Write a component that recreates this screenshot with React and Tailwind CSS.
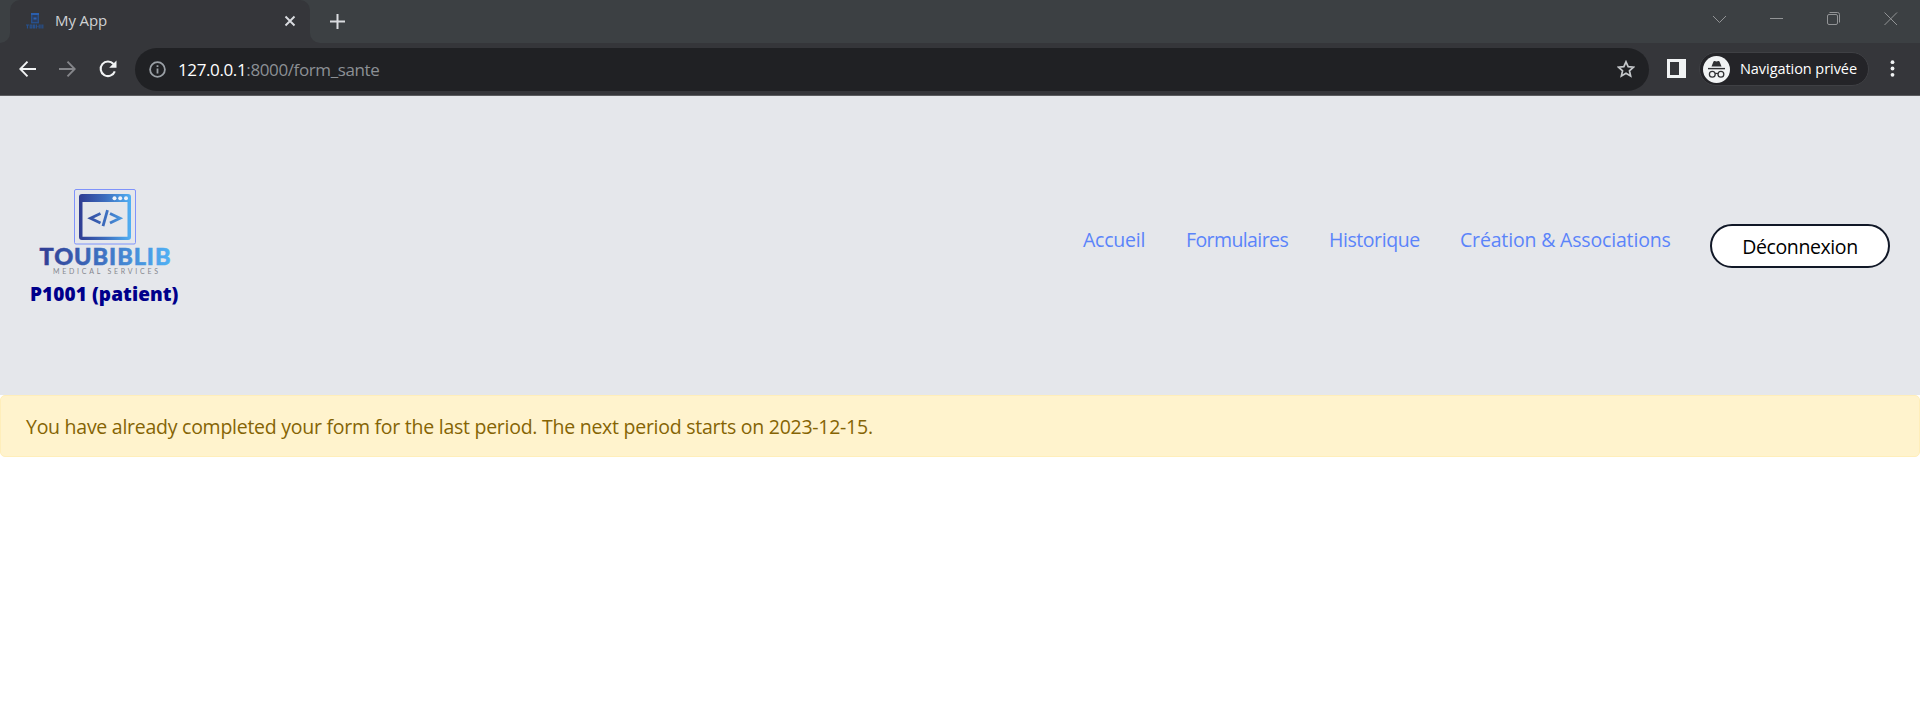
function CodeWindowLogo() {
  return (
    <svg width="148" height="86" viewBox="0 0 148 86" className="block">
      <defs>
        <linearGradient id="brand" gradientUnits="userSpaceOnUse" x1="9" y1="0" x2="140" y2="0">
          <stop offset="0" stopColor="#2f3c92" />
          <stop offset="0.5" stopColor="#3f74c4" />
          <stop offset="1" stopColor="#50b0f4" />
        </linearGradient>
        <linearGradient id="frame" gradientUnits="userSpaceOnUse" x1="49" y1="0" x2="101" y2="0">
          <stop offset="0" stopColor="#2f3c92" />
          <stop offset="0.5" stopColor="#3c6cbd" />
          <stop offset="1" stopColor="#50b0f4" />
        </linearGradient>
      </defs>
      <rect x="44.5" y="0.5" width="61" height="54.5" rx="1.5" fill="none" stroke="#7f93fb" />
      <path
        fill="url(#frame)"
        fillRule="evenodd"
        d="M52 5H98Q101 5 101 8V48Q101 51 98 51H52Q49 51 49 48V8Q49 5 52 5ZM52.500 13V47.700H97.500V13Z"
      />
      <circle cx="84.5" cy="9.3" r="2" fill="#eef2f8" />
      <circle cx="90.2" cy="9.3" r="2" fill="#eef2f8" />
      <circle cx="96" cy="9.3" r="2" fill="#eef2f8" />
      <path
        d="M70.500 24.500L60.500 29.300L70.500 34.100M80 24.500L90 29.300L80 34.100M77.500 21.200L73 37.200"
        fill="none"
        stroke="url(#frame)"
        strokeWidth="2.8"
      />
      <text x="9.500" y="75.800" textLength="131" lengthAdjust="spacing" fill="url(#brand)" stroke="url(#brand)" strokeWidth="0.5" className="font-['Lato',sans-serif] text-[23.5px] font-black">
        TOUBIBLIB
      </text>
      <text x="23" y="85.300" textLength="105" fill="#85878f" className="font-['Lato',sans-serif] text-[7px]">
        MEDICAL SERVICES
      </text>
    </svg>
  );
}

function Favicon() {
  return (
    <svg width="18" height="18" viewBox="0 0 18 18">
      <rect x="5.700" y="1.700" width="6.600" height="9" fill="#2b3c5c" stroke="#27508c" strokeWidth="1.400" />
      <path d="M5 1h8v2H5z" fill="#2a5fae" />
      <path d="M7.500 5.500h3v2h-3z" fill="#2f62b0" />
      <path
        d="M0 13h3M1.500 13v3.500M4.200 13h1.600v3H4.200zM7.500 12.500v3.500h1.200v-3.500M10.500 12.500v4M11.500 14.500h.8M13.200 12.500v4M15 12.500v4M16.800 12.500v4"
        fill="none"
        stroke="#27508c"
        strokeWidth="1.200"
      />
    </svg>
  );
}

function TabStrip() {
  return (
    <div className="flex h-[43px] bg-[#3c4043]">
      <div className="flex w-[10px] items-end bg-[#35363a]">
        <div className="h-full w-full rounded-br-[10px] bg-[#3c4043]" />
      </div>
      <div className="h-full w-[300px] bg-[#3c4043]">
        <div className="flex h-full items-center rounded-t-[10px] bg-[#35363a] pb-[1px] pl-4">
          <Favicon />
          <span className="ml-[11px] flex-1 pb-[2px] font-['Open_Sans',sans-serif] text-[15px] leading-[18px] tracking-[-0.100px] text-[#d0d2d4]">My App</span>
          <svg width="12" height="12" viewBox="0 0 12 12" className="mr-[14px]">
            <path d="M1.500 1.500l9 9M10.500 1.500l-9 9" stroke="#dadce0" strokeWidth="1.900" />
          </svg>
        </div>
      </div>
      <div className="flex-1 bg-[#35363a]">
        <div className="flex h-full items-center justify-between rounded-bl-[10px] bg-[#3c4043] pl-5 pr-[22px]">
          <svg width="15" height="15" viewBox="0 0 15 15">
            <path d="M7.500 0v15M0 7.500h15" stroke="#dadce0" strokeWidth="2" />
          </svg>
          <div className="flex items-center gap-[44px] pb-[6px]">
            <svg width="13" height="14" viewBox="0 0 13 14" fill="none" stroke="#929496">
              <path d="M0 4l6.500 6.500L13 4" />
            </svg>
            <svg width="13" height="14" viewBox="0 0 13 14" fill="none" stroke="#929496">
              <path d="M0 6.500h13" />
            </svg>
            <svg width="13" height="14" viewBox="0 0 13 14" fill="none" stroke="#929496">
              <rect x="0.500" y="2.500" width="10" height="10" rx="1.500" />
              <path d="M2.500 0.500h8a2 2 0 0 1 2 2v8" />
            </svg>
            <svg width="14" height="14" viewBox="0 0 14 14" fill="none" stroke="#929496">
              <path d="M0.500 0.500l12.500 12.500M13 0.500l-12.500 12.500" />
            </svg>
          </div>
        </div>
      </div>
    </div>
  );
}

function Incognito() {
  return (
    <svg width="27" height="27" viewBox="0 0 27 27">
      <circle cx="13.500" cy="13.500" r="13.500" fill="#f1f3f4" />
      <path d="M8.500 10.500l2-5q.4-.8 1.200-.5l1.800.5 1.800-.5q.8-.3 1.200.5l2 5z" fill="#303134" />
      <path d="M5 12.600h17" stroke="#303134" strokeWidth="1.400" />
      <g fill="none" stroke="#303134" strokeWidth="1.300">
        <circle cx="9.300" cy="18.300" r="2.900" />
        <circle cx="17.900" cy="18.300" r="2.900" />
        <path d="M12.200 17.800q1.400-.8 2.800 0" />
      </g>
    </svg>
  );
}

function Toolbar() {
  return (
    <div className="flex h-[53px] items-center border-b border-[#5b5c5f] bg-[#35363a] pl-[19px]">
      <svg width="17" height="16" viewBox="0 0 17 16" fill="none" stroke="#f1f3f4" strokeWidth="1.900" className="mb-[1px]">
        <path d="M17 8H1.500M8.500 0.700L1.300 8l7.200 7.300" />
      </svg>
      <svg width="17" height="16" viewBox="0 0 17 16" fill="none" stroke="#85868a" strokeWidth="1.900" className="mb-[1px] ml-[23px]">
        <path d="M0 8h15.500M8.500 0.700L15.700 8l-7.200 7.300" />
      </svg>
      <svg width="18" height="18" viewBox="0 0 18 18" className="mb-[1px] ml-[23px]">
        <path d="M15.800 11.300A7.300 7.300 0 1 1 14.500 4" fill="none" stroke="#f1f3f4" strokeWidth="2.100" />
        <path d="M17.500 0.500v7.300h-7.300z" fill="#f1f3f4" />
      </svg>
      <div className="ml-[18px] flex h-[43px] w-[1514px] items-center rounded-full bg-[#202124] pl-[14px] pr-[14px]">
        <svg width="17" height="17" viewBox="0 0 17 17">
          <circle cx="8.500" cy="8.500" r="7.400" fill="none" stroke="#9aa0a6" strokeWidth="1.800" />
          <path d="M8.500 7.500v5M8.500 4.300v1.800" stroke="#9aa0a6" strokeWidth="1.800" />
        </svg>
        <span className="ml-[12px] flex-1 pt-[2px] font-['Open_Sans',sans-serif] text-[17px] leading-6 tracking-[-0.380px] text-[#8c9095]">
          <span className="text-white">127.0.0.1</span>:8000/form_sante
        </span>
        <svg width="18" height="18" viewBox="0 0 18 18">
          <path d="M9 1.800l2.150 4.900 5.300.5-4 3.550 1.180 5.250L9 13.250 4.370 16l1.180-5.250-4-3.550 5.300-.5z" fill="none" stroke="#c4c7ca" strokeWidth="1.700" />
        </svg>
      </div>
      <svg width="19" height="19" viewBox="0 0 19 19" className="mb-[1px] ml-[18px]">
        <path d="M0 0h19v19H0zM3 3v13h9V3z" fill="#f1f3f4" fillRule="evenodd" />
      </svg>
      <div className="ml-[13px] flex h-[34px] w-[170px] items-center rounded-full border border-[#3f4044] bg-[#242428] pl-[3px]">
        <Incognito />
        <span className="ml-[10px] whitespace-nowrap font-['Open_Sans',sans-serif] text-[14.500px] leading-5 tracking-[-0.060px] text-white">Navigation privée</span>
      </div>
      <svg width="5" height="17" viewBox="0 0 5 17" fill="#f1f3f4" className="mb-[1px] ml-[21px]">
        <circle cx="2.500" cy="2.200" r="1.900" />
        <circle cx="2.500" cy="8.500" r="1.900" />
        <circle cx="2.500" cy="14.800" r="1.900" />
      </svg>
    </div>
  );
}

export default function App() {
  return (
    <div className="min-h-[722px] w-full bg-white font-['Open_Sans','Noto_Sans',sans-serif]">
      <TabStrip />
      <Toolbar />
      <header className="flex h-[299px] items-start justify-between bg-[#e5e7eb] pl-[30px] pr-[30px]">
        <div className="flex flex-col items-start pt-[93px]">
          <CodeWindowLogo />
          <p className="mt-1 whitespace-nowrap text-[19px] font-extrabold leading-[30px] tracking-[0.080px] text-[#00008b]">P1001 (patient)</p>
        </div>
        <nav className="flex items-start pt-[128px] text-[19.500px] leading-[30px] text-[#5b84fa]">
          <div className="mt-[1px] flex">
            <a className="w-[103px] whitespace-nowrap tracking-[-0.220px]">Accueil</a>
            <a className="w-[143px] whitespace-nowrap tracking-[-0.600px]">Formulaires</a>
            <a className="w-[131px] whitespace-nowrap tracking-[-0.430px]">Historique</a>
            <a className="w-[250px] whitespace-nowrap tracking-[-0.170px]">Création &amp; Associations</a>
          </div>
          <button className="flex h-[44px] w-[180px] items-center justify-center rounded-full border-2 border-[#111827] bg-white pt-[2px] tracking-[-0.400px] text-black">
            Déconnexion
          </button>
        </nav>
      </header>
      <div className="flex h-[62px] items-center rounded-[5px] border border-[#ffeeba] bg-[#fff3cd] pl-[25px] pt-[2px] text-[19.500px] leading-[30px] tracking-[-0.260px] text-[#856404]">
        You have already completed your form for the last period. The next period starts on 2023-12-15.
      </div>
    </div>
  );
}
